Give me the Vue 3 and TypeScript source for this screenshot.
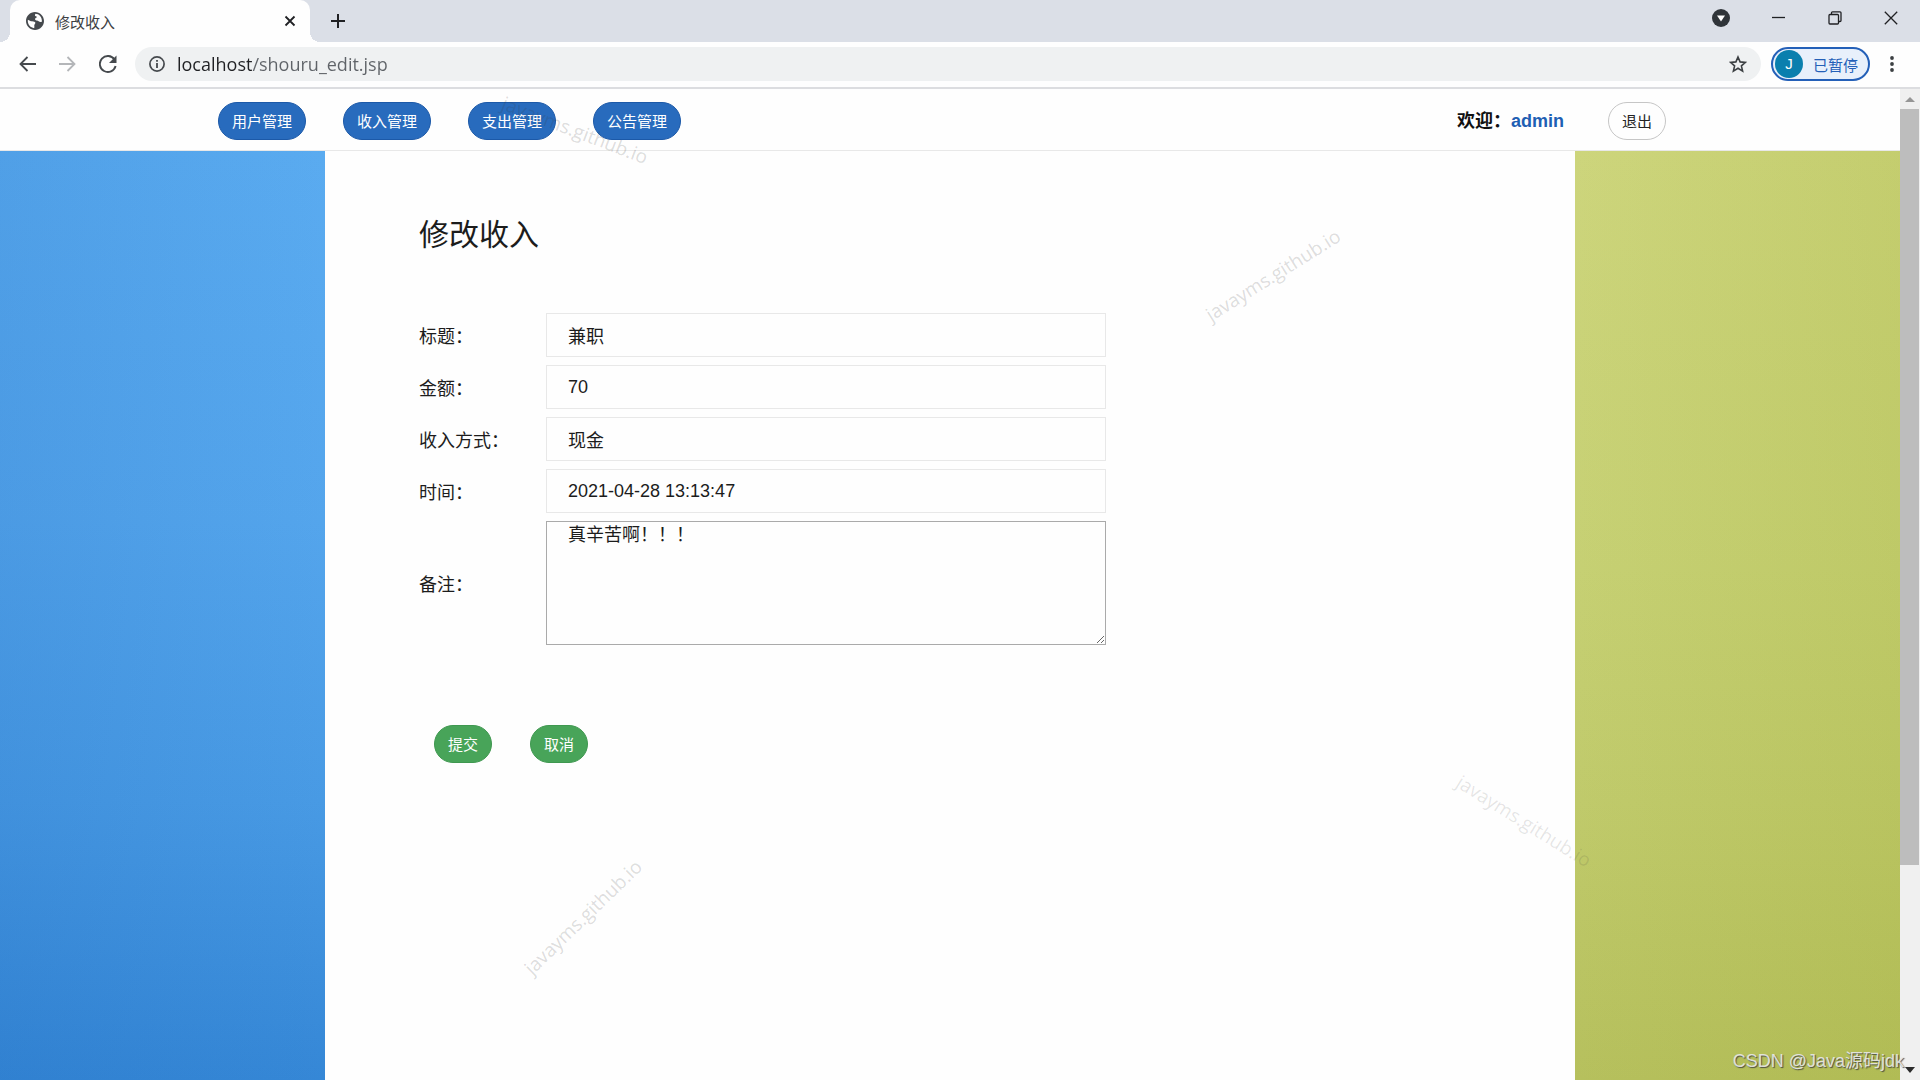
<script setup lang="ts">
import { reactive, ref } from 'vue'

interface Field {
  id: 'title' | 'amount' | 'method' | 'time'
  label: string
}

const address = ref('localhost/shouru_edit.jsp')
const menu: string[] = ['用户管理', '收入管理', '支出管理', '公告管理']
const fields: Field[] = [
  { id: 'title', label: '标题：' },
  { id: 'amount', label: '金额：' },
  { id: 'method', label: '收入方式：' },
  { id: 'time', label: '时间：' },
]
const form = reactive({
  title: '兼职',
  amount: '70',
  method: '现金',
  time: '2021-04-28 13:13:47',
  note: '真辛苦啊！！！',
})
</script>

<template>
  <div class="window">
    <header class="tabs">
      <div class="tab">
        <svg class="globe" viewBox="2 2 20 20" aria-hidden="true">
          <path d="M12 2C6.48 2 2 6.48 2 12s4.48 10 10 10 10-4.48 10-10S17.52 2 12 2zm-1 17.930c-3.950-.49-7-3.850-7-7.930 0-.62.08-1 .1-1.300L7.500 12.200c1.500.8 3.700-.2 4.700 1.300.8 1.400-.9 2-1 3.300-.1 1.200.5 1.900-.2 3.130zM19.700 12.500c-1.300 1-2.700.6-3.700-.3-1-.9-2.600-.4-3.500-1.300-.9-1-.3-2.300.9-2.600 1.100-.3.6-1.500-.4-1.500-1.200 0-1.500-1.200-.5-2.800 4 .1 7.300 3.500 7.200 8.500z" />
        </svg>
        <span class="tab-title">修改收入</span>
        <button class="plain" aria-label="关闭标签页">
          <svg width="12" height="12" viewBox="0 0 12 12"><path d="M1.500 1.500l9 9M10.500 1.500l-9 9" stroke="#202124" stroke-width="1.800" /></svg>
        </button>
      </div>
      <button class="plain new-tab" aria-label="新标签页">
        <svg width="16" height="16" viewBox="0 0 16 16"><path d="M8 1v14M1 8h14" stroke="#202124" stroke-width="2" /></svg>
      </button>
      <div class="win-controls">
        <button class="plain" aria-label="搜索标签页">
          <svg width="18" height="18" viewBox="0 0 18 18"><circle cx="9" cy="9" r="9" fill="#2f3439" /><path d="M5 6.500h8L9 12.500z" fill="#fff" /></svg>
        </button>
        <button class="plain" aria-label="最小化">
          <svg width="14" height="14" viewBox="0 0 14 14"><path d="M0 6.500h13" stroke="#202124" stroke-width="1.300" /></svg>
        </button>
        <button class="plain" aria-label="还原">
          <svg width="14" height="14" viewBox="0 0 14 14" fill="none" stroke="#202124" stroke-width="1.300"><rect x="1" y="3.500" width="9.500" height="9.500" rx="1" /><path d="M3.500 3.500V1.800q0-1 1-1H12q1 0 1 1v7.700q0 1-1 1h-1.500" /></svg>
        </button>
        <button class="plain" aria-label="关闭">
          <svg width="14" height="14" viewBox="0 0 14 14"><path d="M.8.8l12.400 12.400M13.200.8L.8 13.200" stroke="#202124" stroke-width="1.300" /></svg>
        </button>
      </div>
    </header>

    <div class="toolbar">
      <div class="history">
        <button class="plain" aria-label="后退">
          <svg width="17" height="16" viewBox="0 0 17 16" fill="none" stroke="#45494d" stroke-width="1.800"><path d="M17 8H2M8.500 1l-7 7 7 7" /></svg>
        </button>
        <button class="plain" aria-label="前进">
          <svg width="17" height="16" viewBox="0 0 17 16" fill="none" stroke="#b4b6b9" stroke-width="1.800"><path d="M0 8h15M8.500 1l7 7-7 7" /></svg>
        </button>
        <button class="plain" aria-label="刷新">
          <svg width="18" height="18" viewBox="0 0 18 18"><path d="M15.500 4.500A8 8 0 1 0 16.600 11" fill="none" stroke="#45494d" stroke-width="1.900" /><path d="M17.500.5V8H10z" fill="#45494d" /></svg>
        </button>
      </div>
      <div class="address">
        <svg width="16" height="16" viewBox="0 0 16 16" aria-hidden="true"><circle cx="8" cy="8" r="7.100" fill="none" stroke="#45494d" stroke-width="1.700" /><path d="M8 7v5M8 4v1.800" stroke="#45494d" stroke-width="1.800" /></svg>
        <input v-model="address" class="url" aria-label="地址" />
        <button class="plain" aria-label="收藏">
          <svg width="18" height="18" viewBox="0 0 18 18"><path d="M9 2l2.100 4.900 5.300.5-4 3.500 1.200 5.200L9 13.300l-4.600 2.800 1.200-5.200-4-3.500 5.300-.5z" fill="none" stroke="#3c4043" stroke-width="1.600" /></svg>
        </button>
      </div>
      <button class="profile"><span class="avatar">J</span>已暂停</button>
      <button class="plain more" aria-label="菜单">
        <svg width="4" height="16" viewBox="0 0 4 16" fill="#3c4043"><circle cx="2" cy="2" r="1.900" /><circle cx="2" cy="8" r="1.900" /><circle cx="2" cy="14" r="1.900" /></svg>
      </button>
    </div>

    <div class="viewport">
      <div class="page">
        <nav class="navbar">
          <button v-for="item in menu" :key="item" class="pill blue">{{ item }}</button>
          <div class="user">欢迎：<a href="#">admin</a></div>
          <button class="pill outline">退出</button>
        </nav>
        <div class="columns">
          <div class="side-blue"></div>
          <main class="content">
            <h1>修改收入</h1>
            <form @submit.prevent>
              <div v-for="f in fields" :key="f.id" class="row">
                <label :for="f.id">{{ f.label }}</label>
                <input :id="f.id" v-model="form[f.id]" class="field" type="text" />
              </div>
              <div class="row">
                <label for="note">备注：</label>
                <textarea id="note" v-model="form.note" class="field note"></textarea>
              </div>
              <div class="actions">
                <button class="pill green" type="submit">提交</button>
                <button class="pill green" type="reset">取消</button>
              </div>
            </form>
          </main>
          <div class="side-green"></div>
        </div>
      </div>
      <div class="scrollbar" aria-hidden="true">
        <svg width="20" height="20" viewBox="0 0 20 20"><path d="M5 13l5-5 5 5z" fill="#969696" /></svg>
        <div class="track"><div class="thumb"></div></div>
        <svg width="20" height="20" viewBox="0 0 20 20"><path d="M5 7h10l-5 6z" fill="#2b2b2b" /></svg>
      </div>
    </div>

    <span class="mark mark-nav">javayms.github.io</span>
    <span class="mark mark-top">javayms.github.io</span>
    <span class="mark mark-left">javayms.github.io</span>
    <span class="mark mark-right">javayms.github.io</span>
    <span class="credit">CSDN @Java源码jdk</span>
  </div>
</template>

<style>
body {
  margin: 0;
}
</style>

<style scoped>
* {
  box-sizing: border-box;
}
.window {
  position: relative;
  display: flex;
  flex-direction: column;
  min-height: 100vh;
  overflow: hidden;
  background: #fefefe;
  color: #1c1c1c;
  font-family: "Liberation Sans", "Noto Sans CJK SC", sans-serif;
}
button,
input,
textarea {
  font-family: inherit;
}
svg {
  display: block;
  flex: none;
}
.plain {
  padding: 0;
  border: 0;
  background: none;
}
.tabs {
  display: flex;
  align-items: center;
  height: 42px;
  padding-left: 10px;
  background: #dbdfe7;
}
.tab {
  position: relative;
  display: flex;
  align-items: center;
  width: 300px;
  height: 42px;
  padding: 0 14px 0 16px;
  border-radius: 10px 10px 0 0;
  background: #fefefe;
}
.tab::before,
.tab::after {
  content: "";
  position: absolute;
  bottom: 0;
  width: 10px;
  height: 10px;
}
.tab::before {
  right: 100%;
  background: radial-gradient(circle at 0 0, #dbdfe7 10px, #fefefe 10px);
}
.tab::after {
  left: 100%;
  background: radial-gradient(circle at 100% 0, #dbdfe7 10px, #fefefe 10px);
}
.globe {
  width: 18px;
  height: 18px;
  fill: #45494d;
}
.tab-title {
  flex: 1;
  margin-left: 11px;
  font-size: 15px;
  color: #3c4043;
}
.new-tab {
  margin-left: 20px;
}
.win-controls {
  display: flex;
  align-items: center;
  gap: 42px;
  height: 36px;
  margin: 0 22px 6px auto;
}
.toolbar {
  display: flex;
  align-items: center;
  height: 47px;
  padding: 1px 26px 2px 19px;
  border-bottom: 2px solid #dcdde0;
}
.history {
  display: flex;
  align-items: center;
  gap: 23px;
  width: 116px;
}
.address {
  display: flex;
  flex: 1;
  align-items: center;
  height: 34px;
  padding: 0 14px;
  border-radius: 17px;
  background: #eff1f2;
}
.url {
  flex: 1;
  height: 34px;
  margin-left: 12px;
  padding: 0;
  border: 0;
  outline: 0;
  background: linear-gradient(to right, #202124 75px, #5f6368 75px) text;
  color: transparent;
  font-family: "Open Sans", "Noto Sans", sans-serif;
  font-size: 18px;
}
.profile {
  display: flex;
  align-items: center;
  gap: 10px;
  height: 34px;
  margin-left: 10px;
  padding: 0 10px 0 2px;
  border: 2px solid #2460b8;
  border-radius: 17px;
  background: #e8f0fb;
  color: #2460b8;
  font-size: 15px;
}
.avatar {
  width: 28px;
  height: 28px;
  border-radius: 50%;
  background: #0a7fae;
  color: #fff;
  font-size: 15px;
  line-height: 28px;
}
.more {
  margin-left: 20px;
}
.viewport {
  display: flex;
  flex: 1;
}
.page {
  display: flex;
  flex: 1;
  flex-direction: column;
}
.navbar {
  display: flex;
  align-items: center;
  gap: 37px;
  height: 62px;
  padding: 2px 234px 0 218px;
  border-bottom: 1px solid #e8e8e8;
}
.pill {
  height: 38px;
  padding: 0 13px 1px;
  border: 1px solid;
  border-radius: 19px;
  font-size: 15px;
}
.blue {
  border-color: #1c59a8;
  background: #286bbd;
  color: #fff;
}
.outline {
  margin-left: 7px;
  border-color: #c6c6c6;
  background: #fefefe;
  color: #222;
}
.green {
  border-color: #3f9850;
  background: #48a459;
  color: #fff;
}
.user {
  margin-left: auto;
  padding-bottom: 4px;
  font-size: 18px;
  font-weight: bold;
  color: #111;
}
.user a {
  color: #1e5fb3;
  text-decoration: none;
}
.columns {
  display: grid;
  flex: 1;
  grid-template-columns: 325px 1fr 325px;
}
.side-blue {
  background:
    linear-gradient(to right, rgb(20 90 175 / 14%), transparent),
    linear-gradient(#5aabf0, #54a5ec 40%, #489ae4 70%, #3587d6);
}
.side-green {
  background:
    linear-gradient(to right, transparent, rgb(150 165 40 / 16%)),
    linear-gradient(#cdd57c, #c6d073 45%, #c0ca6b 70%, #b6c05d);
}
.content {
  padding: 62px 94px;
}
h1 {
  margin: 0 0 56px;
  font-size: 30px;
  font-weight: normal;
  line-height: 44px;
}
.row {
  display: flex;
  align-items: center;
  margin-bottom: 8px;
  font-size: 18px;
}
.row label {
  width: 127px;
}
.field {
  width: 560px;
  height: 44px;
  padding: 0 21px;
  border: 1px solid #e8e8e8;
  outline: 0;
  background: #fefefe;
  color: #1c1c1c;
  font-size: 18px;
}
.note {
  height: 124px;
  border-color: #aaa;
  line-height: 26px;
}
.actions {
  display: flex;
  gap: 38px;
  margin-top: 80px;
  padding-left: 15px;
}
.scrollbar {
  display: flex;
  flex-direction: column;
  width: 20px;
  background: #f0f0f0;
}
.track {
  flex: 1;
}
.thumb {
  width: 19px;
  height: 79.5%;
  background: #bdbdbd;
}
.mark {
  position: absolute;
  color: rgb(60 60 60 / 18%);
  font-family: "Open Sans", "Noto Sans", sans-serif;
  font-size: 19px;
  line-height: 24px;
  pointer-events: none;
}
.mark-nav {
  top: 130px;
  left: 575px;
  transform: translate(-50%, -50%) rotate(21deg);
}
.mark-top {
  top: 275px;
  left: 1273px;
  transform: translate(-50%, -50%) rotate(-32deg);
}
.mark-left {
  top: 917px;
  left: 583px;
  transform: translate(-50%, -50%) rotate(-44deg);
}
.mark-right {
  top: 821px;
  left: 1524px;
  color: rgb(60 60 60 / 13%);
  transform: translate(-50%, -50%) rotate(32deg);
}
.credit {
  position: absolute;
  right: 16px;
  bottom: 8px;
  color: rgb(235 235 235 / 90%);
  font-size: 18px;
  text-shadow: 1px 1px 1px rgb(60 60 60 / 85%);
}
</style>
